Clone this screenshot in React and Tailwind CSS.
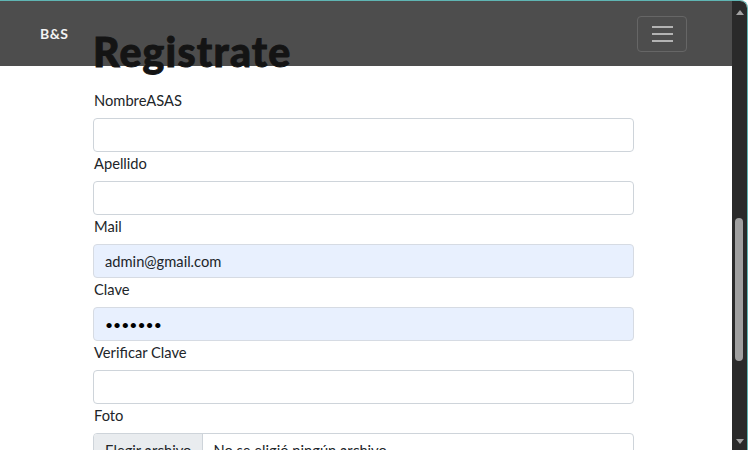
import React from "react";

const fields = [
  { label: "NombreASAS", value: "", filled: false },
  { label: "Apellido", value: "", filled: false },
  { label: "Mail", value: "admin@gmail.com", filled: true },
  { label: "Clave", value: "•••••••", filled: true, password: true },
  { label: "Verificar Clave", value: "", filled: false },
];

const Navbar = () => (
  <div className="absolute left-0 top-0 z-0 flex h-[65px] w-full items-center justify-between bg-[#4d4d4d] pl-[40px] pr-[45px]">
    <span className="text-[14px] font-bold tracking-[0.5px] text-[#f2f2f2]">B&amp;S</span>
    <button className="flex h-[36px] w-[50px] flex-col items-center justify-center gap-[5px] rounded-[4px] border border-[#666666]">
      <span className="h-[2px] w-[21px] bg-[#b3b3b3]" />
      <span className="h-[2px] w-[21px] bg-[#b3b3b3]" />
      <span className="h-[2px] w-[21px] bg-[#b3b3b3]" />
    </button>
  </div>
);

const Scrollbar = () => (
  <div className="relative h-full w-[15px] bg-[#2a2a2a]">
    <div className="absolute left-[4px] top-[9px] h-0 w-0 border-x-[4px] border-b-[5px] border-x-transparent border-b-[#a3a3a3]" />
    <div className="absolute left-[3px] top-[217px] h-[143px] w-[8px] rounded-full bg-[#a0a0a0]" />
    <div className="absolute bottom-[6px] left-[4px] h-0 w-0 border-x-[4px] border-t-[5px] border-x-transparent border-t-[#a3a3a3]" />
  </div>
);

export default function App() {
  return (
    <div
      className="flex h-[450px] w-[748px] overflow-hidden rounded-tr-[8px] border-r border-t border-[#5fb5b3] bg-white"
      style={{ fontFamily: "Lato, 'Open Sans', sans-serif" }}
    >
      <div className="relative h-full flex-1 overflow-hidden">
        <Navbar />
        <div className="relative z-10 ml-[93px] w-[541px] pt-[27px]">
          <h1 className="mb-[13px] text-[41px] font-black leading-[48px] tracking-[1.2px] text-[#141414] [-webkit-text-stroke:0.9px_#141414]">
            Registrate
          </h1>
          {fields.map((f) => (
            <div key={f.label}>
              <label className="mb-[7px] block pl-[1px] text-[14.7px] leading-[22px] text-[#212529]">{f.label}</label>
              <div
                className={`flex h-[34px] items-center rounded-[4px] border px-[11px] text-[14.7px] text-[#212529] ${
                  f.filled ? "border-[#d6dbe3] bg-[#e8f0fe]" : "border-[#ced4da] bg-white"
                }`}
              >
                {f.password ? (
                  <span className="text-[14px] text-black">{f.value}</span>
                ) : (
                  f.value
                )}
              </div>
            </div>
          ))}
          <label className="mb-[7px] block pl-[1px] text-[14.7px] leading-[22px] text-[#212529]">Foto</label>
          <div className="flex h-[34px] overflow-hidden rounded-[4px] border border-[#ced4da] text-[14.7px] text-[#212529]">
            <span className="flex items-center border-r border-[#ced4da] bg-[#e9ecef] px-[11px]">Elegir archivo</span>
            <span className="flex items-center px-[10px]">No se eligió ningún archivo</span>
          </div>
        </div>
      </div>
      <Scrollbar />
    </div>
  );
}
